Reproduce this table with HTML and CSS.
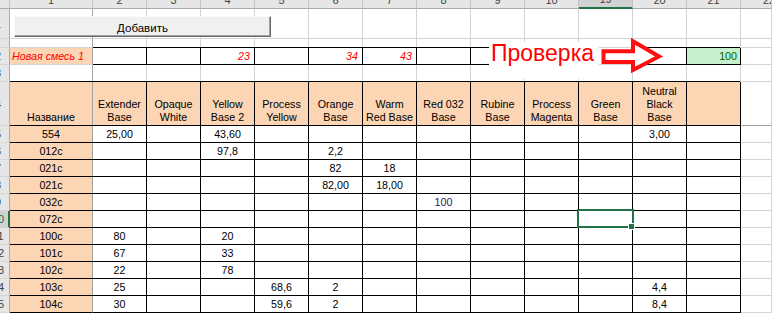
FILE: index.html
```html
<!DOCTYPE html>
<html lang="ru">
<head>
<meta charset="utf-8">
<title>Смеси</title>
<link rel="stylesheet" href="styles.css">
</head>
<body>
<div class="sheet">
  <div class="grid">
    <!-- column headers -->
    <div class="ch"></div>
    <div class="ch"><span>1</span></div>
    <div class="ch"><span>2</span></div>
    <div class="ch"><span>3</span></div>
    <div class="ch"><span>4</span></div>
    <div class="ch"><span>5</span></div>
    <div class="ch"><span>6</span></div>
    <div class="ch"><span>7</span></div>
    <div class="ch"><span>8</span></div>
    <div class="ch"><span>9</span></div>
    <div class="ch"><span>10</span></div>
    <div class="ch chs"><span>19</span></div>
    <div class="ch"><span>20</span></div>
    <div class="ch"><span>21</span></div>
    <div class="ch ch-last"><span>22</span></div>

    <!-- row: button -->
    <div class="rh"><span>1</span></div><div class="fz"></div>
    <div></div><div></div><div></div><div></div><div></div><div></div><div></div><div></div><div></div><div></div><div></div><div></div><div></div>

    <!-- row: spacer -->
    <div class="rh"><span></span></div><div class="fz"></div>
    <div></div><div></div><div></div><div></div><div></div><div></div><div></div><div></div><div></div><div></div><div></div><div></div><div></div>

    <!-- row: new mix -->
    <div class="rh"><span>2</span></div>
    <div class="pe fz red l">Новая смесь 1</div>
    <div class="bl"></div>
    <div class="b"></div>
    <div class="b red r">23</div>
    <div class="b"></div>
    <div class="b red r">34</div>
    <div class="b red r">43</div>
    <div class="b"></div>
    <div class="b"></div>
    <div></div>
    <div></div>
    <div class="b"></div>
    <div class="b ok r">100</div>
    <div></div>

    <!-- row: empty -->
    <div class="rh"><span>3</span></div><div class="fz"></div>
    <div></div><div></div><div></div><div></div><div></div><div></div><div></div><div></div><div></div><div></div><div></div><div></div><div></div>

    <!-- row: table header -->
    <div class="rh"><span>4</span></div>
    <div class="pe n1 hd"><span>Название</span></div>
    <div class="pe bl hd"><span>Extender<br>Base</span></div>
    <div class="pe b hd"><span>Opaque<br>White</span></div>
    <div class="pe b hd"><span>Yellow<br>Base 2</span></div>
    <div class="pe b hd"><span>Process<br>Yellow</span></div>
    <div class="pe b hd"><span>Orange<br>Base</span></div>
    <div class="pe b hd"><span>Warm<br>Red Base</span></div>
    <div class="pe b hd"><span>Red 032<br>Base</span></div>
    <div class="pe b hd"><span>Rubine<br>Base</span></div>
    <div class="pe b hd"><span>Process<br>Magenta</span></div>
    <div class="pe b hd"><span>Green<br>Base</span></div>
    <div class="pe b hd"><span>Neutral<br>Black<br>Base</span></div>
    <div class="pe b hd"></div>
    <div class="fzb"></div>

    <!-- 554 -->
    <div class="rh"><span>5</span></div>
    <div class="pe n1">554</div>
    <div class="bl">25,00</div>
    <div class="b"></div><div class="b">43,60</div><div class="b"></div><div class="b"></div><div class="b"></div><div class="b"></div><div class="b"></div><div class="b"></div><div class="b"></div><div class="b">3,00</div><div class="b"></div>
    <div></div>

    <!-- 012c -->
    <div class="rh"><span>6</span></div>
    <div class="pe n1">012c</div>
    <div class="bl"></div>
    <div class="b"></div><div class="b">97,8</div><div class="b"></div><div class="b">2,2</div><div class="b"></div><div class="b"></div><div class="b"></div><div class="b"></div><div class="b"></div><div class="b"></div><div class="b"></div>
    <div></div>

    <!-- 021c -->
    <div class="rh"><span>7</span></div>
    <div class="pe n1">021c</div>
    <div class="bl"></div>
    <div class="b"></div><div class="b"></div><div class="b"></div><div class="b">82</div><div class="b">18</div><div class="b"></div><div class="b"></div><div class="b"></div><div class="b"></div><div class="b"></div><div class="b"></div>
    <div></div>

    <!-- 021c -->
    <div class="rh"><span>8</span></div>
    <div class="pe n1">021c</div>
    <div class="bl"></div>
    <div class="b"></div><div class="b"></div><div class="b"></div><div class="b">82,00</div><div class="b">18,00</div><div class="b"></div><div class="b"></div><div class="b"></div><div class="b"></div><div class="b"></div><div class="b"></div>
    <div></div>

    <!-- 032c -->
    <div class="rh"><span>9</span></div>
    <div class="pe n1">032c</div>
    <div class="bl"></div>
    <div class="b"></div><div class="b"></div><div class="b"></div><div class="b"></div><div class="b"></div><div class="b pu">100</div><div class="b"></div><div class="b"></div><div class="b"></div><div class="b"></div><div class="b"></div>
    <div></div>

    <!-- 072c -->
    <div class="rh rhs"><span>10</span></div>
    <div class="pe n1">072c</div>
    <div class="bl"></div>
    <div class="b"></div><div class="b"></div><div class="b"></div><div class="b"></div><div class="b"></div><div class="b"></div><div class="b"></div><div class="b"></div><div class="b sel"></div><div class="b"></div><div class="b"></div>
    <div></div>

    <!-- 100c -->
    <div class="rh"><span>11</span></div>
    <div class="pe n1">100c</div>
    <div class="bl">80</div>
    <div class="b"></div><div class="b">20</div><div class="b"></div><div class="b"></div><div class="b"></div><div class="b"></div><div class="b"></div><div class="b"></div><div class="b"></div><div class="b"></div><div class="b"></div>
    <div></div>

    <!-- 101c -->
    <div class="rh"><span>12</span></div>
    <div class="pe n1">101c</div>
    <div class="bl">67</div>
    <div class="b"></div><div class="b">33</div><div class="b"></div><div class="b"></div><div class="b"></div><div class="b"></div><div class="b"></div><div class="b"></div><div class="b"></div><div class="b"></div><div class="b"></div>
    <div></div>

    <!-- 102c -->
    <div class="rh"><span>13</span></div>
    <div class="pe n1">102c</div>
    <div class="bl">22</div>
    <div class="b"></div><div class="b">78</div><div class="b"></div><div class="b"></div><div class="b"></div><div class="b"></div><div class="b"></div><div class="b"></div><div class="b"></div><div class="b"></div><div class="b"></div>
    <div></div>

    <!-- 103c -->
    <div class="rh"><span>14</span></div>
    <div class="pe n1">103c</div>
    <div class="bl">25</div>
    <div class="b"></div><div class="b"></div><div class="b">68,6</div><div class="b">2</div><div class="b"></div><div class="b"></div><div class="b"></div><div class="b"></div><div class="b"></div><div class="b">4,4</div><div class="b"></div>
    <div></div>

    <!-- 104c -->
    <div class="rh"><span>15</span></div>
    <div class="pe n1">104c</div>
    <div class="bl">30</div>
    <div class="b"></div><div class="b"></div><div class="b">59,6</div><div class="b">2</div><div class="b"></div><div class="b"></div><div class="b"></div><div class="b"></div><div class="b"></div><div class="b">8,4</div><div class="b"></div>
    <div></div>
  </div>

  <button class="btn" type="button">Добавить</button>
  <div class="check">Проверка</div>
  <svg class="arrow" width="70" height="40" viewBox="0 0 70 40" aria-hidden="true">
    <path d="M5.5 15.3 H35 V5.3 L61 20.5 L35 34 V26 H5.5 Z" fill="#fff" stroke="#ff1010" stroke-width="4" stroke-linejoin="miter"/>
  </svg>
</div>
</body>
</html>
```

FILE: styles.css
```css
html, body {
  margin: 0;
  padding: 0;
}

body {
  width: 772px;
  height: 313px;
  overflow: hidden;
  background: #fff;
  font-family: "Liberation Sans", Arial, sans-serif;
  font-size: 10.7px;
  color: #000;
}

.sheet {
  position: relative;
  width: 772px;
  height: 313px;
}

.grid {
  display: grid;
  grid-template-columns: 10px 83px repeat(12, 54px) 1fr;
  grid-template-rows: 9px 30px 9px 17px 17px 44px repeat(11, 17px);
}

.grid > * {
  box-sizing: border-box;
  min-width: 0;
  border-right: 1px solid #d4d4d4;
  border-bottom: 1px solid #d4d4d4;
  display: flex;
  align-items: center;
  justify-content: center;
  white-space: nowrap;
  overflow: hidden;
}

/* column headers */
.ch {
  background: #e6e6e6;
  border-right-color: #c4c4c4;
  border-bottom-color: #ababab;
  align-items: flex-end;
  color: #444;
  font-size: 11px;
}

.ch span {
  flex: none;
  line-height: 11px;
  margin-bottom: 2px;
}

.chs {
  background: #d2d2d2;
  border-bottom: 2px solid #217346;
}

.ch-last {
  justify-content: flex-start;
  padding-left: 22px;
}

/* row headers: wide label column scrolled mostly out of view */
.rh {
  background: #e6e6e6;
  border-right-color: #ababab;
  border-bottom-color: #d6d6d6;
  justify-content: flex-start;
  color: #444;
  font-size: 11px;
}

.rh span {
  flex: none;
  width: 26px;
  margin-left: -15px;
  text-align: center;
}

.rhs {
  background: #d2d2d2;
  border-right: 2px solid #217346;
  color: #217346;
}

/* cell variants */
.pe {
  background: #fcd5b4;
}

.fz {
  border-right-color: #a3a3a3;
}

.fzb {
  border-bottom-color: #a3a3a3;
}

.b {
  border-right-color: #000;
  border-bottom-color: #000;
  box-shadow: -1px -1px 0 #000;
}

.bl {
  border-right-color: #000;
  border-bottom-color: #000;
  box-shadow: 0 -1px 0 #000;
}

.n1 {
  border-right-color: #a3a3a3;
  border-bottom-color: #000;
  box-shadow: 0 -1px 0 #000;
}

.hd {
  align-items: flex-end;
}

.hd span {
  text-align: center;
  line-height: 13px;
  padding-bottom: 1px;
}

.red {
  color: #ff0000;
  font-style: italic;
}

.l {
  justify-content: flex-start;
  padding-left: 2px;
}

.r {
  justify-content: flex-end;
  padding-right: 4px;
}

.ok {
  background: #c6efce;
  color: #006100;
  padding-right: 3px;
}

.pu {
  color: #2c1358;
}

.sel {
  position: relative;
  z-index: 2;
  overflow: visible;
}

.sel::before {
  content: "";
  position: absolute;
  left: -2px;
  top: -2px;
  right: -2px;
  bottom: -1px;
  border: 2px solid #217346;
}

.sel::after {
  content: "";
  position: absolute;
  right: -3px;
  bottom: -3px;
  width: 5px;
  height: 5px;
  background: #217346;
  border: 1px solid #fff;
}

/* floating controls */
.btn {
  position: absolute;
  left: 14px;
  top: 16px;
  width: 257px;
  height: 21px;
  box-sizing: border-box;
  margin: 0;
  padding: 2px 0 0;
  background: #f0f0f0;
  border: 1px solid;
  border-color: #fafafa #696969 #696969 #fafafa;
  box-shadow: inset -1px -1px 0 #a0a0a0;
  font-family: "Liberation Sans", Arial, sans-serif;
  font-size: 11.5px;
  color: #000;
  display: flex;
  align-items: center;
  justify-content: center;
}

.check {
  position: absolute;
  left: 489px;
  top: 42px;
  width: 110px;
  height: 37px;
  box-sizing: border-box;
  padding-left: 2px;
  background: #fff;
  color: #ff0000;
  font-size: 23px;
  line-height: 23px;
}

.arrow {
  position: absolute;
  left: 598px;
  top: 36px;
  display: block;
}
```
